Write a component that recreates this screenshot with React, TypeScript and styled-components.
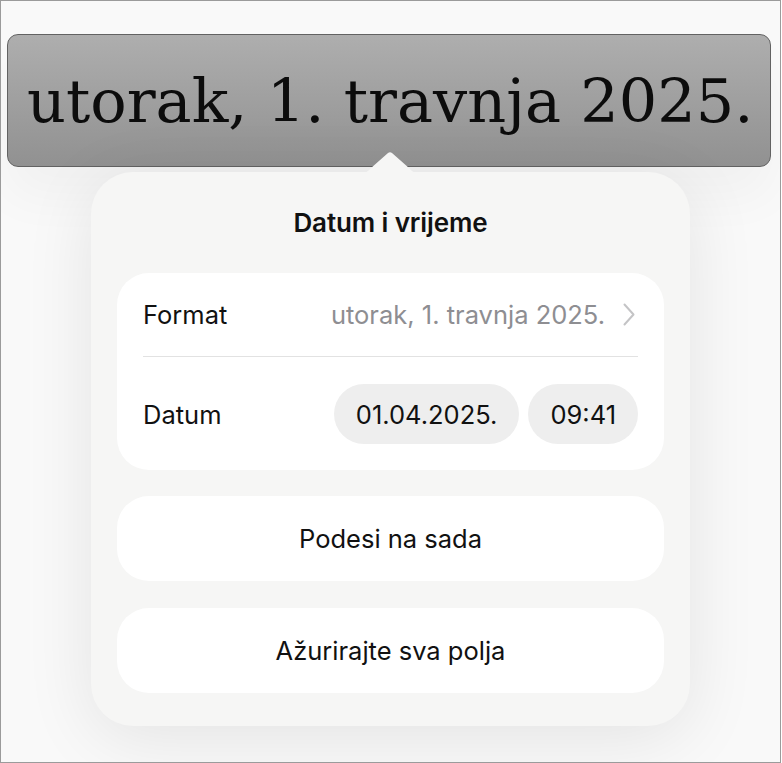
import React from "react";
import styled, { createGlobalStyle } from "styled-components";

const GlobalStyle = createGlobalStyle`
  html, body {
    margin: 0;
    padding: 0;
    background: #ffffff;
  }
  body {
    font-family: Inter, "Noto Sans", "Liberation Sans", sans-serif;
    -webkit-font-smoothing: antialiased;
  }
`;

/* --- Styles --- */
const Frame = styled.div`
  position: relative;
  width: 781px;
  height: 763px;
  box-sizing: border-box;
  border: 1px solid #9b9b9b;
  background: #f9f9f9;
  overflow: hidden;
  padding: 33px 0 0 6px;
`;
const DateField = styled.div`
  position: relative;
  z-index: 1;
  width: 764px;
  height: 133px;
  box-sizing: border-box;
  border: 1px solid #626262;
  border-radius: 11px;
  background: linear-gradient(#aeaeae, #919191);
  box-shadow: 0 30px 50px rgba(0, 0, 0, 0.035);
  display: flex;
  align-items: center;
  padding-left: 19px;
  font-family: "DejaVu Serif", "Liberation Serif", serif;
  font-size: 60.5px;
  color: #0c0c0c;
  white-space: nowrap;
`;
const Popover = styled.div`
  position: relative;
  z-index: 2;
  margin: 5px 0 0 84px;
  width: 599px;
  height: 554px;
  box-sizing: border-box;
  border-radius: 42px;
  background: #f6f6f5;
  box-shadow: 0 12px 70px rgba(0, 0, 0, 0.09);
  padding: 0 26px;
  display: flex;
  flex-direction: column;
`;
const Arrow = styled.svg`
  position: absolute;
  top: -21px;
  left: 271px;
`;
const Title = styled.div`
  height: 101px;
  display: flex;
  align-items: center;
  justify-content: center;
  font-size: 26px;
  font-weight: 600;
  color: #111;
  letter-spacing: -0.1px;
`;
const Card = styled.div`
  background: #ffffff;
  border-radius: 32px;
  padding: 0 26px;
  display: flex;
  flex-direction: column;
`;
const Row = styled.div<{ $divided?: boolean; $tall?: boolean }>`
  height: ${(p) => (p.$tall ? "113px" : "84px")};
  display: flex;
  align-items: center;
  justify-content: space-between;
  border-bottom: ${(p) => (p.$divided ? "1px solid #e2e2e2" : "none")};
  box-sizing: border-box;
  padding-top: ${(p) => (p.$tall ? "1px" : "0")};
`;
const Label = styled.span`
  font-size: 25.5px;
  color: #111;
`;
const Value = styled.span`
  display: flex;
  align-items: center;
  gap: 18px;
  font-size: 25.5px;
  color: #8e8e92;
  margin-right: 3px;
`;
const Pills = styled.div`
  display: flex;
  gap: 9px;
`;
const Pill = styled.span`
  height: 60px;
  display: flex;
  align-items: center;
  padding: 0 22px;
  border-radius: 30px;
  background: #eeeeee;
  font-size: 25.5px;
  color: #111;
`;
const Actions = styled.div`
  display: flex;
  flex-direction: column;
  gap: 27px;
  margin-top: 26px;
`;
const ActionButton = styled.div`
  height: 85px;
  border-radius: 32px;
  background: #ffffff;
  display: flex;
  align-items: center;
  justify-content: center;
  font-size: 25.5px;
  color: #111;
`;

function Chevron() {
  return (
    <svg width="12" height="23" viewBox="0 0 12 23">
      <path
        d="M1.5 1.5 L10.5 11.5 L1.5 21.5"
        fill="none"
        stroke="#c4c4c6"
        strokeWidth="2"
        strokeLinecap="round"
        strokeLinejoin="round"
      />
    </svg>
  );
}

export default function App() {
  return (
    <>
      <GlobalStyle />
      <Frame>
        <DateField>utorak, 1. travnja 2025.</DateField>
        <Popover>
          <Arrow width="56" height="22" viewBox="0 0 56 22">
            <path
              d="M0 22 C5 22 7 19 9 17 L26 2 Q28 0.3 30 2 L47 17 C49 19 51 22 56 22 Z"
              fill="#f6f6f5"
            />
          </Arrow>
          <Title>Datum i vrijeme</Title>
          <Card>
            <Row $divided>
              <Label>Format</Label>
              <Value>
                utorak, 1. travnja 2025.
                <Chevron />
              </Value>
            </Row>
            <Row $tall>
              <Label>Datum</Label>
              <Pills>
                <Pill>01.04.2025.</Pill>
                <Pill>09:41</Pill>
              </Pills>
            </Row>
          </Card>
          <Actions>
            <ActionButton>Podesi na sada</ActionButton>
            <ActionButton>Ažurirajte sva polja</ActionButton>
          </Actions>
        </Popover>
      </Frame>
    </>
  );
}
